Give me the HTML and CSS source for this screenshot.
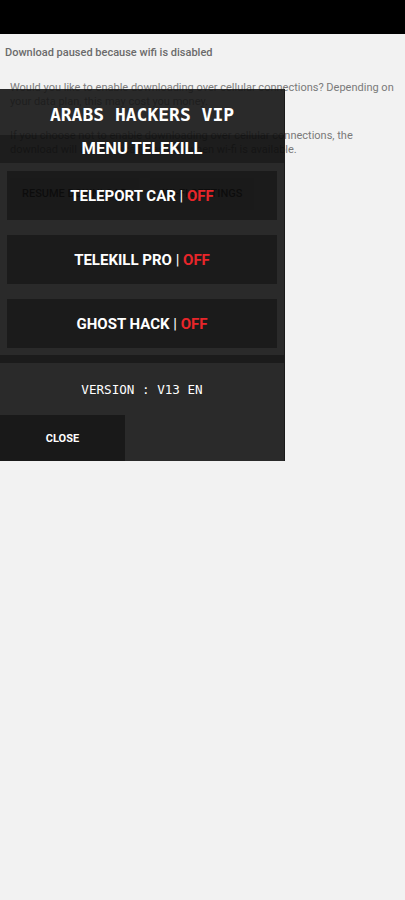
FILE: index.html
```html
<!DOCTYPE html>
<html>
<head>
<meta charset="utf-8">
<link rel="stylesheet" href="styles.css">
</head>
<body>
<div class="statusbar"></div>
<main class="page">
  <div class="heading">Download paused because wifi is disabled</div>
  <p class="para">Would you like to enable downloading over cellular connections? Depending on your data plan, this may cost you money.</p>
  <p class="para">If you choose not to enable downloading over cellular connections, the download will automatically resume when wi-fi is available.</p>
  <div class="actions">
    <div class="act">RESUME DOWNLOAD</div>
    <div class="act">WI-FI SETTINGS</div>
  </div>
</main>
<section class="menu">
  <div class="title">ARABS HACKERS VIP</div>
  <div class="subtitle">MENU TELEKILL</div>
  <div class="list">
    <div class="item">TELEPORT CAR <span class="sep">|</span> <span class="off">OFF</span></div>
    <div class="item">TELEKILL PRO <span class="sep">|</span> <span class="off">OFF</span></div>
    <div class="item">GHOST HACK <span class="sep">|</span> <span class="off">OFF</span></div>
  </div>
  <div class="divider"></div>
  <div class="version">VERSION : V13 EN</div>
  <div class="footer">
    <div class="close">CLOSE</div>
  </div>
</section>
</body>
</html>
```
FILE: styles.css
```css
html, body {
  margin: 0;
  padding: 0;
}
body {
  width: 405px;
  height: 900px;
  background: #f2f2f2;
  font-family: Roboto, "Liberation Sans", sans-serif;
  position: relative;
  overflow: hidden;
}
.statusbar {
  height: 34px;
  background: #000;
}
.page {
  padding: 0 5px;
}
.heading {
  margin-top: 12px;
  font-size: 11px;
  font-weight: 500;
  color: #6b6b6b;
  line-height: 14px;
}
.para {
  margin: 0;
  padding: 0 5px;
  font-size: 11px;
  line-height: 13.5px;
  color: #7a7a7a;
}
.para:first-of-type {
  margin-top: 21px;
}
.para + .para {
  margin-top: 21px;
}
.actions {
  display: flex;
  gap: 11px;
  margin-top: 22px;
  padding-left: 5px;
}
.act {
  height: 32px;
  line-height: 32px;
  padding: 0 12px;
  font-size: 11px;
  font-weight: 500;
  color: #111;
  background: #e6e6e6;
  white-space: nowrap;
}

.menu {
  position: absolute;
  left: 0;
  top: 89px;
  width: 284px;
  background: rgba(20, 20, 20, 0.9);
  border-right: 1px solid #1a1a1a;
  display: flex;
  flex-direction: column;
  color: #fff;
}
.title {
  height: 46px;
  line-height: 51px;
  text-align: center;
  font-family: "DejaVu Sans Mono", monospace;
  font-weight: 700;
  font-size: 18px;
}
.subtitle {
  height: 28px;
  line-height: 28px;
  text-align: center;
  background: rgba(0, 0, 0, 0.3);
  font-weight: 700;
  font-size: 16.5px;
}
.list {
  display: flex;
  flex-direction: column;
  gap: 15px;
  padding: 8px 7px 7px;
}
.item {
  height: 49px;
  line-height: 50px;
  text-align: center;
  background: rgba(0, 0, 0, 0.35);
  font-weight: 700;
  font-size: 15px;
}
.sep { font-weight: 400; }
.off { color: #e8262a; }
.divider {
  height: 8px;
  background: rgba(0, 0, 0, 0.35);
}
.version {
  height: 52px;
  line-height: 54px;
  text-align: center;
  font-family: "DejaVu Sans Mono", monospace;
  font-size: 12.6px;
}
.footer {
  display: flex;
  height: 46px;
}
.close {
  width: 125px;
  line-height: 48px;
  text-align: center;
  background: rgba(0, 0, 0, 0.4);
  font-weight: 700;
  font-size: 11px;
}
```
